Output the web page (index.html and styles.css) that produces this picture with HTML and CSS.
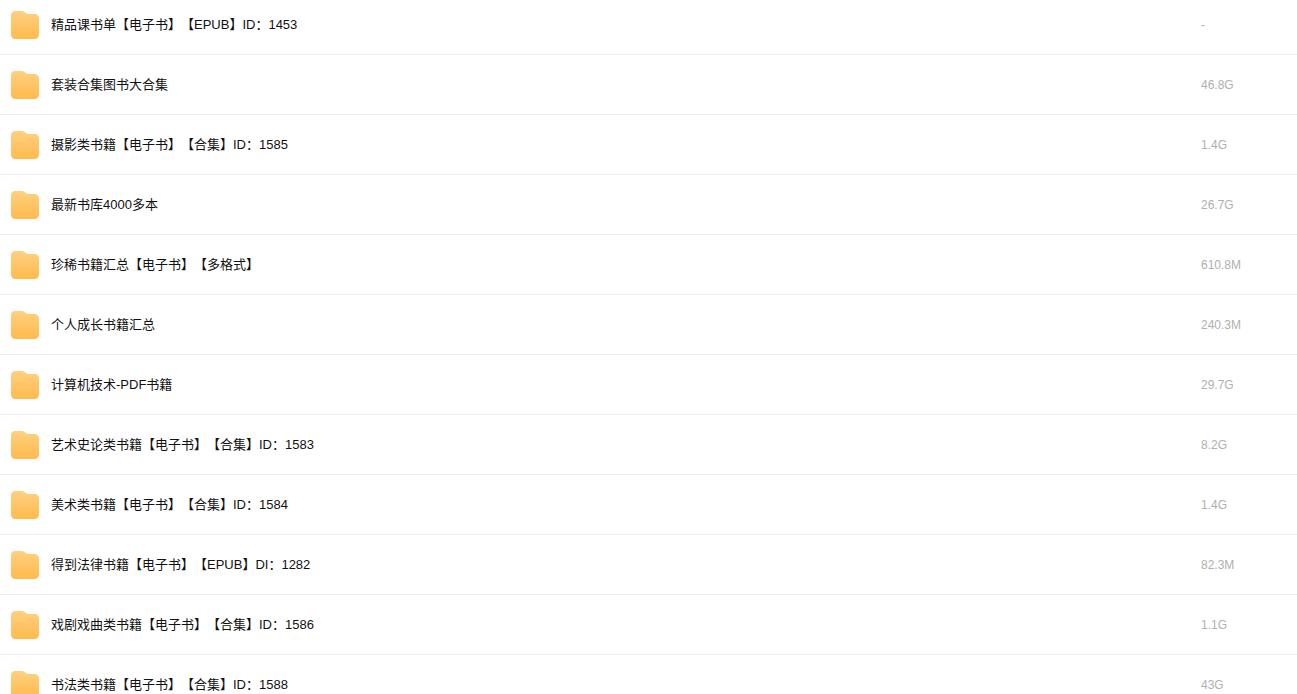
FILE: index.html
```html
<!DOCTYPE html>
<html lang="zh-CN">
<head>
    <meta charset="UTF-8">
    <meta name="viewport" content="width=device-width, initial-scale=1.0">
    <title>电子书</title>
    <link rel="stylesheet" href="styles.css">
</head>
<body>
    <svg class="sprite" aria-hidden="true">
      <defs>
        <linearGradient id="folder-fill" x1="0" y1="0" x2="0" y2="1">
          <stop offset="0" stop-color="#ffd080"/>
          <stop offset="1" stop-color="#ffba4c"/>
        </linearGradient>
        <symbol id="folder" viewBox="0 0 28 28">
          <path fill="url(#folder-fill)" d="M4.5 0H10.6C12.2 0 13 0.5 14.2 1.6C15.4 2.7 16 3 17.6 3H23.3C26.4 3 28 4.6 28 7.7V23.3C28 26.4 26.4 28 23.3 28H4.7C1.6 28 0 26.4 0 23.3V4.5C0 1.6 1.6 0 4.5 0Z"/>
        </symbol>
      </defs>
    </svg>

    <div class="file-container">
      <table class="file-list">
        <tbody>
          <tr>
            <td class="file-name"><a href="#"><svg class="icon"><use href="#folder"/></svg><span>精品课书单【电子书】【EPUB】ID：1453</span></a></td>
            <td class="file-size">-</td>
          </tr>
          <tr>
            <td class="file-name"><a href="#"><svg class="icon"><use href="#folder"/></svg><span>套装合集图书大合集</span></a></td>
            <td class="file-size">46.8G</td>
          </tr>
          <tr>
            <td class="file-name"><a href="#"><svg class="icon"><use href="#folder"/></svg><span>摄影类书籍【电子书】【合集】ID：1585</span></a></td>
            <td class="file-size">1.4G</td>
          </tr>
          <tr>
            <td class="file-name"><a href="#"><svg class="icon"><use href="#folder"/></svg><span>最新书库4000多本</span></a></td>
            <td class="file-size">26.7G</td>
          </tr>
          <tr>
            <td class="file-name"><a href="#"><svg class="icon"><use href="#folder"/></svg><span>珍稀书籍汇总【电子书】【多格式】</span></a></td>
            <td class="file-size">610.8M</td>
          </tr>
          <tr>
            <td class="file-name"><a href="#"><svg class="icon"><use href="#folder"/></svg><span>个人成长书籍汇总</span></a></td>
            <td class="file-size">240.3M</td>
          </tr>
          <tr>
            <td class="file-name"><a href="#"><svg class="icon"><use href="#folder"/></svg><span>计算机技术-PDF书籍</span></a></td>
            <td class="file-size">29.7G</td>
          </tr>
          <tr>
            <td class="file-name"><a href="#"><svg class="icon"><use href="#folder"/></svg><span>艺术史论类书籍【电子书】【合集】ID：1583</span></a></td>
            <td class="file-size">8.2G</td>
          </tr>
          <tr>
            <td class="file-name"><a href="#"><svg class="icon"><use href="#folder"/></svg><span>美术类书籍【电子书】【合集】ID：1584</span></a></td>
            <td class="file-size">1.4G</td>
          </tr>
          <tr>
            <td class="file-name"><a href="#"><svg class="icon"><use href="#folder"/></svg><span>得到法律书籍【电子书】【EPUB】DI：1282</span></a></td>
            <td class="file-size">82.3M</td>
          </tr>
          <tr>
            <td class="file-name"><a href="#"><svg class="icon"><use href="#folder"/></svg><span>戏剧戏曲类书籍【电子书】【合集】ID：1586</span></a></td>
            <td class="file-size">1.1G</td>
          </tr>
          <tr>
            <td class="file-name"><a href="#"><svg class="icon"><use href="#folder"/></svg><span>书法类书籍【电子书】【合集】ID：1588</span></a></td>
            <td class="file-size">43G</td>
          </tr>
        </tbody>
      </table>
    </div>
</body>
</html>
```
FILE: styles.css
```css
body {
  margin: 0;
  background-color: #fff;
  font-family: "Liberation Sans", "Noto Sans CJK SC", sans-serif;
  text-spacing-trim: space-all;
}

.sprite {
  position: absolute;
  width: 0;
  height: 0;
}

.file-container {
  height: 100vh;
  overflow: hidden;
}

.file-list {
  width: 100%;
  table-layout: fixed;
  border-collapse: separate;
  border-spacing: 0;
}

.file-list td {
  padding: 16px 0 15px;
  border-bottom: 1px solid #ececec;
  line-height: 28px;
  vertical-align: top;
}

.file-list tr:first-child td {
  padding-top: 11px;
}

.file-list .file-name {
  padding-left: 11px;
}

.file-name a {
  display: flex;
  align-items: center;
  gap: 12px;
  color: #111;
  font-size: 13px;
  text-decoration: none;
}

.file-name a:hover {
  color: #06a7ff;
}

.icon {
  width: 28px;
  height: 28px;
}

.file-list .file-size {
  width: 96px;
  color: #afafaf;
  font-size: 12px;
}
```
